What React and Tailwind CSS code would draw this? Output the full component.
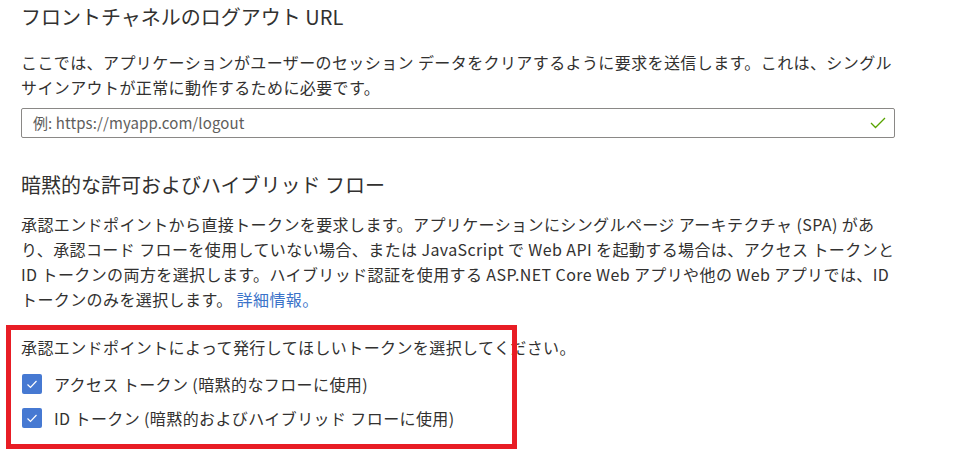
import React from "react";

const font = "font-['Noto_Sans_CJK_JP',sans-serif]";

function Check() {
  return (
    <span className="flex h-[20px] w-[20px] shrink-0 items-center justify-center rounded-[2px] bg-[#4679d2]">
      <svg width="20" height="20" viewBox="0 0 20 20" fill="none">
        <path d="M5.5 10.5 L8.5 13.5 L14.5 7" stroke="white" strokeWidth="1.2" />
      </svg>
    </span>
  );
}

function Line({ children }) {
  return <div className="whitespace-nowrap">{children}</div>;
}

export default function App() {
  return (
    <div className={`relative h-[466px] w-[970px] overflow-hidden bg-white px-[21px] text-[#323130] ${font}`}>
      <h1 className="mt-[3px] text-[20px] leading-[28px]">フロントチャネルのログアウト URL</h1>
      <div className="mt-[19px] text-[16px] leading-[25px] tracking-[0.4px]">
        <Line>ここでは、アプリケーションがユーザーのセッション データをクリアするように要求を送信します。これは、シングル</Line>
        <Line>サインアウトが正常に動作するために必要です。</Line>
      </div>
      <div className="mt-[8px] flex h-[30px] w-[874px] items-center justify-between rounded-[2px] border border-[#8a8886] pl-[11px] pr-[8px]">
        <span className="text-[15px] tracking-[0.1px] text-[#605e5c]">例: https://myapp.com/logout</span>
        <svg width="16" height="12" viewBox="0 0 16 12" fill="none">
          <path d="M1 6 L5.5 10.5 L15 1" stroke="#57a300" strokeWidth="1.3" />
        </svg>
      </div>

      <h2 className="mt-[33px] text-[20px] leading-[28px]">暗黙的な許可およびハイブリッド フロー</h2>
      <div className="mt-[13px] text-[16px] leading-[25px] tracking-[0.4px]">
        <Line>承認エンドポイントから直接トークンを要求します。アプリケーションにシングルページ アーキテクチャ (SPA) があ</Line>
        <Line>り、承認コード フローを使用していない場合、または JavaScript で Web API を起動する場合は、アクセス トークンと</Line>
        <Line>ID トークンの両方を選択します。ハイブリッド認証を使用する ASP.NET Core Web アプリや他の Web アプリでは、ID</Line>
        <Line>
          トークンのみを選択します。 <span className="text-[#3b73c9]">詳細情報。</span>
        </Line>
      </div>

      <div className="mt-[23px] text-[16px] leading-[25px] tracking-[0.4px]">承認エンドポイントによって発行してほしいトークンを選択してください。</div>
      <div className="mt-[7px] text-[16px] tracking-[0.4px]">
        <label className="flex h-[34px] items-center gap-[12px] pl-[1px]">
          <Check />
          <span>アクセス トークン (暗黙的なフローに使用)</span>
        </label>
        <label className="flex h-[34px] items-center gap-[12px] pl-[1px]">
          <Check />
          <span>ID トークン (暗黙的およびハイブリッド フローに使用)</span>
        </label>
      </div>

      {/* annotation box */}
      <div className="pointer-events-none absolute left-[6px] top-[325px] h-[124px] w-[511px] border-[5px] border-[#e81d25]" />
    </div>
  );
}
